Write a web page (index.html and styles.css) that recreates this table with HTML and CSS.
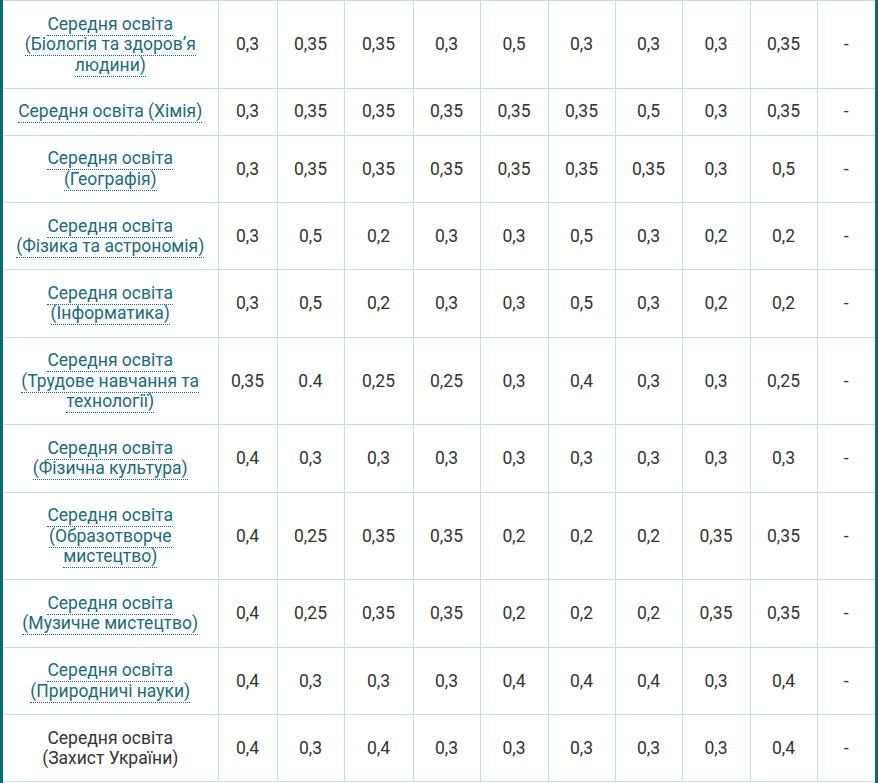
FILE: index.html
```html
<!DOCTYPE html>
<html lang="uk">
<head>
<meta charset="utf-8">
<title>Коефіцієнти</title>
<link rel="stylesheet" href="styles.css">
</head>
<body>
<div class="frame">
<table class="coef">
<colgroup>
<col class="c-name"><col class="c-a"><col class="c-b"><col class="c-c"><col class="c-b"><col class="c-d"><col class="c-b"><col class="c-b"><col class="c-d"><col class="c-b"><col class="c-e">
</colgroup>
<tbody>
<tr><td class="name"><a href="#">Середня освіта<br>(Біологія та здоров’я людини)</a></td><td>0,3</td><td>0,35</td><td>0,35</td><td>0,3</td><td>0,5</td><td>0,3</td><td>0,3</td><td>0,3</td><td>0,35</td><td>-</td></tr>
<tr><td class="name"><a href="#">Середня освіта (Хімія)</a></td><td>0,3</td><td>0,35</td><td>0,35</td><td>0,35</td><td>0,35</td><td>0,35</td><td>0,5</td><td>0,3</td><td>0,35</td><td>-</td></tr>
<tr><td class="name"><a href="#">Середня освіта<br>(Географія)</a></td><td>0,3</td><td>0,35</td><td>0,35</td><td>0,35</td><td>0,35</td><td>0,35</td><td>0,35</td><td>0,3</td><td>0,5</td><td>-</td></tr>
<tr><td class="name"><a href="#">Середня освіта<br>(Фізика та астрономія)</a></td><td>0,3</td><td>0,5</td><td>0,2</td><td>0,3</td><td>0,3</td><td>0,5</td><td>0,3</td><td>0,2</td><td>0,2</td><td>-</td></tr>
<tr><td class="name"><a href="#">Середня освіта<br>(Інформатика)</a></td><td>0,3</td><td>0,5</td><td>0,2</td><td>0,3</td><td>0,3</td><td>0,5</td><td>0,3</td><td>0,2</td><td>0,2</td><td>-</td></tr>
<tr><td class="name"><a href="#">Середня освіта<br>(Трудове навчання та технології)</a></td><td>0,35</td><td>0.4</td><td>0,25</td><td>0,25</td><td>0,3</td><td>0,4</td><td>0,3</td><td>0,3</td><td>0,25</td><td>-</td></tr>
<tr><td class="name"><a href="#">Середня освіта<br>(Фізична культура)</a></td><td>0,4</td><td>0,3</td><td>0,3</td><td>0,3</td><td>0,3</td><td>0,3</td><td>0,3</td><td>0,3</td><td>0,3</td><td>-</td></tr>
<tr><td class="name"><a href="#">Середня освіта<br>(Образотворче мистецтво)</a></td><td>0,4</td><td>0,25</td><td>0,35</td><td>0,35</td><td>0,2</td><td>0,2</td><td>0,2</td><td>0,35</td><td>0,35</td><td>-</td></tr>
<tr><td class="name"><a href="#">Середня освіта<br>(Музичне мистецтво)</a></td><td>0,4</td><td>0,25</td><td>0,35</td><td>0,35</td><td>0,2</td><td>0,2</td><td>0,2</td><td>0,35</td><td>0,35</td><td>-</td></tr>
<tr><td class="name"><a href="#">Середня освіта<br>(Природничі науки)</a></td><td>0,4</td><td>0,3</td><td>0,3</td><td>0,3</td><td>0,4</td><td>0,4</td><td>0,4</td><td>0,3</td><td>0,4</td><td>-</td></tr>
<tr><td class="name">Середня освіта<br>(Захист України)</td><td>0,4</td><td>0,3</td><td>0,4</td><td>0,3</td><td>0,3</td><td>0,3</td><td>0,3</td><td>0,3</td><td>0,4</td><td>-</td></tr>
</tbody>
</table>
<div class="tail"></div>
</div>
</body>
</html>
```

FILE: styles.css
```css
html, body {
  margin: 0;
  padding: 0;
  background: #fff;
}

body {
  font-family: Roboto, "Noto Sans", sans-serif;
  font-size: 17.5px;
  color: #333;
}

.frame {
  width: 878px;
  box-sizing: border-box;
  border-left: 3px solid #0b6a78;
  border-right: 3px solid #0b6a78;
}

.coef {
  width: 872px;
  border-collapse: collapse;
  table-layout: fixed;
}

.c-name { width: 215px; }
.c-a { width: 59px; }
.c-b { width: 67px; }
.c-c { width: 69px; }
.c-d { width: 68px; }
.c-e { width: 58px; }

.coef td {
  border: 1px solid #c6dde4;
  text-align: center;
  vertical-align: middle;
  line-height: 20.4px;
  padding: 12.75px 2px;
  color: #333;
}

.coef tr td:first-child { border-left: none; }
.coef tr td:last-child { border-right: none; }

.coef td.name {
  padding: 12.75px 10px;
}

.coef td.name a {
  color: #1b6b7b;
  text-decoration: none;
  border-bottom: 1px dotted #1b6b7b;
  padding-bottom: 1px;
}

.tail {
  height: 40px;
}
```
